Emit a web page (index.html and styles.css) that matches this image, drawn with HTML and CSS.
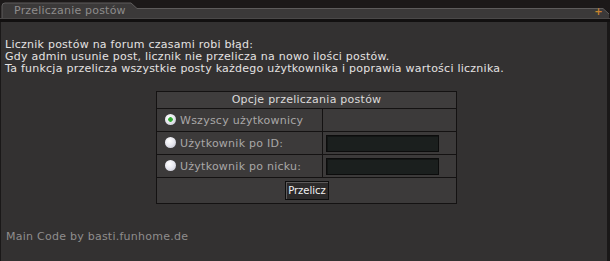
FILE: index.html
```html
<!DOCTYPE html>
<html lang="pl">
<head>
<meta charset="utf-8">
<title>Przeliczanie postów</title>
<link rel="stylesheet" href="styles.css">
</head>
<body>
<div class="win">
  <div class="head">
    <svg class="head-bg" width="610" height="22" viewBox="0 0 610 22" aria-hidden="true">
      <rect x="0" y="0" width="610" height="22" fill="#1c1919"/>
      <path d="M2,19 L2,6 Q2,3 5,3 L131,3 L137,8.5 L603,8.5 L609,14 L609,19 Z" fill="#3b3939"/>
      <path d="M2,19 L2,6 Q2,3 5,3 L131,3 L137,8.5 L603,8.5 L609,14" fill="none" stroke="#5e5c5c" stroke-width="1"/>
      <rect x="0" y="18" width="610" height="1" fill="#4a4848"/>
      <rect x="0" y="19" width="610" height="3" fill="#121010"/>
    </svg>
    <span class="title">Przeliczanie postów</span>
    <span class="plus">+</span>
  </div>
  <div class="body">
    <p class="intro">Licznik postów na forum czasami robi błąd:<br>Gdy admin usunie post, licznik nie przelicza na nowo ilości postów.<br>Ta funkcja przelicza wszystkie posty każdego użytkownika i poprawia wartości licznika.</p>
    <table class="opts">
      <tr class="hrow"><th colspan="2">Opcje przeliczania postów</th></tr>
      <tr class="row">
        <td class="lc"><label><input type="radio" name="m" checked><span>Wszyscy użytkownicy</span></label></td>
        <td class="rc"></td>
      </tr>
      <tr class="row">
        <td class="lc"><label><input type="radio" name="m"><span>Użytkownik po ID:</span></label></td>
        <td class="rc"><input class="field" type="text"></td>
      </tr>
      <tr class="row">
        <td class="lc"><label><input type="radio" name="m"><span>Użytkownik po nicku:</span></label></td>
        <td class="rc"><input class="field" type="text"></td>
      </tr>
      <tr class="brow"><td colspan="2"><button class="btn" type="button">Przelicz</button></td></tr>
    </table>
    <p class="credit">Main Code by basti.funhome.de</p>
  </div>
</div>
</body>
</html>
```
FILE: styles.css
```css
html, body {
  margin: 0;
  padding: 0;
  background: #333131;
}
body {
  width: 610px;
  height: 261px;
  overflow: hidden;
  font-family: "DejaVu Sans", Verdana, sans-serif;
  font-size: 11px;
  letter-spacing: 0.25px;
}
.win {
  width: 610px;
  height: 261px;
  display: flex;
  flex-direction: column;
}
.head {
  position: relative;
  height: 22px;
  flex: none;
}
.head-bg {
  position: absolute;
  left: 0;
  top: 0;
}
.title {
  position: relative;
  display: block;
  padding: 5px 0 0 14px;
  line-height: 12px;
  color: #8e8c8c;
  font-size: 11px;
  letter-spacing: 0.2px;
}
.plus {
  position: absolute;
  right: 7px;
  top: 6px;
  color: #c8842e;
  font-size: 10px;
  line-height: 12px;
  font-weight: bold;
}
.body {
  flex: 1;
  background: #333131;
  border-left: 1px solid #1a1818;
  border-right: 3px solid #1a1818;
  padding: 17px 0 0 4px;
}
.intro {
  margin: 0;
  line-height: 12px;
  color: #e4e2e2;
}
.opts {
  margin: 16px 0 0 151px;
  border-collapse: collapse;
  width: 301px;
  border: 1px solid #141212;
  background: #3c3a3a;
}
.opts th, .opts td {
  border: 1px solid #141212;
  padding: 0;
}
.hrow th {
  height: 16px;
  font-weight: normal;
  color: #dcdada;
  background: #3f3d3d;
  text-align: center;
  line-height: 16px;
}
.row td {
  height: 22px;
}
.lc {
  width: 165px;
}
.lc label {
  display: flex;
  align-items: center;
  gap: 4px;
  padding-left: 8px;
  color: #a9a7a7;
}
.lc input {
  appearance: none;
  -webkit-appearance: none;
  margin: 0;
  width: 11px;
  height: 11px;
  border-radius: 50%;
  background: radial-gradient(circle at 40% 35%, #ffffff 0, #e6e6ee 50%, #b8b8c4 100%);
  border: none;
  position: relative;
  top: -1px;
}
.lc input:checked {
  background:
    radial-gradient(circle at 50% 50%, #2e9a2e 0, #3ab03a 2px, transparent 2.6px),
    radial-gradient(circle at 40% 35%, #ffffff 0, #e6e6ee 50%, #b8b8c4 100%);
}
.rc {
  padding-left: 2px !important;
}
.field {
  display: block;
  box-sizing: border-box;
  width: 113px;
  height: 17px;
  margin: 0 0 0 1px;
  background: #1b1f1e;
  border: 1px solid #0c0c0c;
  box-shadow: inset 1px 1px 0 #121514;
  padding: 0;
}
.brow td {
  height: 25px;
  text-align: center;
}
.btn {
  box-sizing: border-box;
  width: 44px;
  height: 19px;
  margin-left: 1px;
  padding: 0;
  background: #2c2a2a;
  border: 1px solid #0e0e0e;
  box-shadow: inset 1px 1px 0 #5c5a5a;
  color: #f2f2f2;
  font-family: "DejaVu Sans", Verdana, sans-serif;
  font-size: 10px;
  letter-spacing: 0;
  line-height: 16px;
}
.credit {
  margin: 27px 0 0 1px;
  line-height: 12px;
  color: #8f8d8d;
}
```
